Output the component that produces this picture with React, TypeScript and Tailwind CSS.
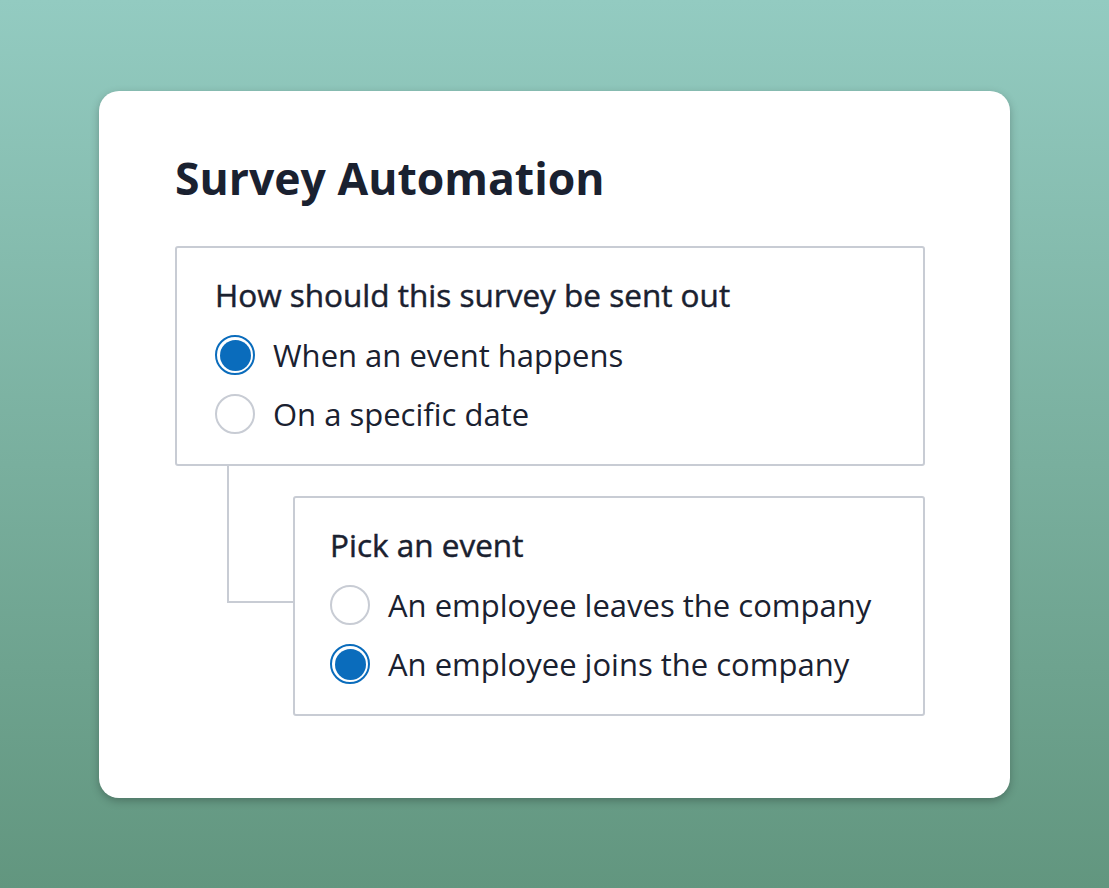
import React from "react";

type Option = { label: string; checked: boolean };

function Radio({ checked }: { checked: boolean }) {
	if (checked) {
		return (
			<span className="flex size-[40px] shrink-0 items-center justify-center rounded-full border-2 border-[#0a6cbc] bg-white">
				<span className="size-[31px] rounded-full bg-[#0a6cbc]" />
			</span>
		);
	}
	return <span className="size-[40px] shrink-0 rounded-full border-2 border-[#c8ccd4] bg-white" />;
}

function RadioGroup({ title, options, className }: { title: string; options: Option[]; className?: string }) {
	return (
		<div className={`rounded-[3px] border-2 border-[#c8ccd4] bg-white ${className ?? ""}`}>
			<p className="text-[31.5px] leading-[38px] font-medium text-[#1a2130] [-webkit-text-stroke:0.45px_#1a2130]">
				{title}
			</p>
			<ul className="mt-[21px] flex flex-col gap-[19px]">
				{options.map((option) => (
					<li key={option.label} className="flex items-center gap-[18px]">
						<Radio checked={option.checked} />
						<span className="text-[31px] leading-[40px] text-[#1a2130]">{option.label}</span>
					</li>
				))}
			</ul>
		</div>
	);
}

export default function App() {
	return (
		<div
			className="flex h-[888px] w-full items-start justify-center bg-gradient-to-b from-[#93cbc1] to-[#62967f] pt-[91px]"
			style={{ fontFamily: "'Open Sans', 'Noto Sans', sans-serif" }}
		>
			<div className="h-[707px] w-[911px] rounded-[20px] bg-white pr-[85px] pl-[76px] pt-[57px] shadow-[0_3px_8px_rgba(0,0,0,0.25)]">
				<h1 className="text-[44.5px] leading-[60px] font-bold text-[#1a2130]">Survey Automation</h1>

				<RadioGroup
					className="mt-[38px] h-[220px] px-[38px] pt-[28px]"
					title="How should this survey be sent out"
					options={[
						{ label: "When an event happens", checked: true },
						{ label: "On a specific date", checked: false },
					]}
				/>

				<div className="flex">
					<div className="w-[118px] shrink-0">
						<div className="ml-[52px] h-[137px] border-b-2 border-l-2 border-[#c8ccd4]" />
					</div>
					<RadioGroup
						className="mt-[30px] h-[220px] grow px-[35px] pt-[28px]"
						title="Pick an event"
						options={[
							{ label: "An employee leaves the company", checked: false },
							{ label: "An employee joins the company", checked: true },
						]}
					/>
				</div>
			</div>
		</div>
	);
}
